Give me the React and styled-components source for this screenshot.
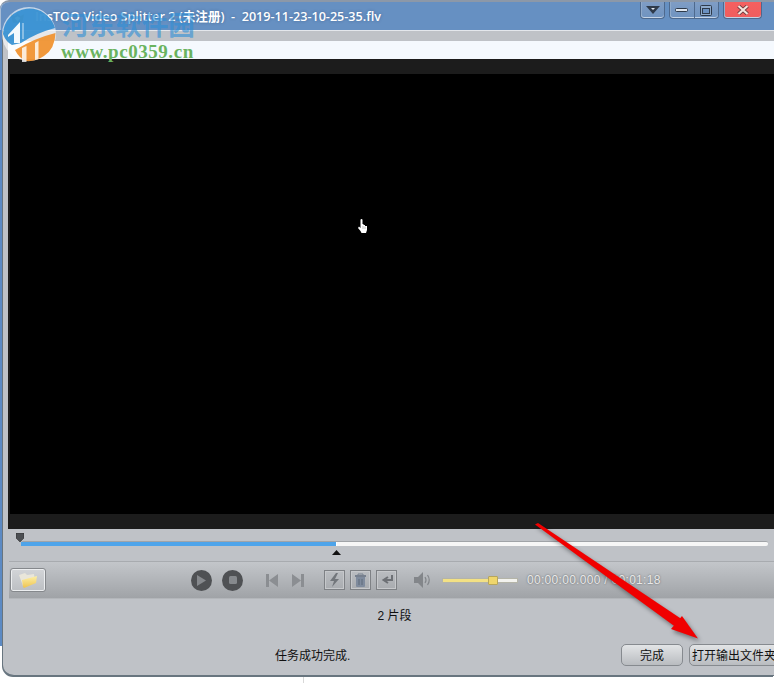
import React from 'react'
import styled, { createGlobalStyle } from 'styled-components'

const CJK = `"Liberation Sans", "Noto Sans CJK SC", sans-serif`

const GlobalStyle = createGlobalStyle`
  html, body {
    margin: 0;
    background: #fff;
    overflow: hidden;
  }
`

const App = () => (
  <Page>
    <GlobalStyle />
    <TitleBar>
      <AppIcon viewBox="0 0 16 10">
        <path d="M1 1l4 2 3-3 3 3 4-2-2 9H3z" fill="#37513f" />
        <path d="M5 5l3-2 3 2-3 4z" fill="#d9e58c" />
      </AppIcon>
      <Title>InsTOO Video Splitter 2 (未注册)&nbsp; - &nbsp;2019-11-23-10-25-35.flv</Title>
      <WindowControls>
        <MenuButton>
          <svg width="14" height="8" viewBox="0 0 14 8">
            <path d="M0 0h14L7 8z" fill="#2e3a4a" />
            <path d="M5 2h4L7 4z" fill="#dfe6ef" />
          </svg>
        </MenuButton>
        <SizeGroup>
          <SizeButton>
            <svg width="14" height="5" viewBox="0 0 14 5">
              <rect x="0.5" y="0.5" width="12" height="3" rx="1" fill="#dfe6ef" stroke="#2e3a4a" />
            </svg>
          </SizeButton>
          <SizeButton>
            <svg width="12" height="11" viewBox="0 0 12 11">
              <rect x="0.5" y="0.5" width="11" height="10" rx="1" fill="#8eaacb" stroke="#2e3a4a" />
              <rect x="2.5" y="3.5" width="7" height="5" fill="#6a90c0" stroke="#2e3a4a" />
            </svg>
          </SizeButton>
        </SizeGroup>
        <CloseButton>
          <svg width="12" height="10" viewBox="0 0 12 10">
            <path d="M1.500 1l9 8M10.500 1l-9 8" stroke="#6d3b3f" strokeWidth="3.800" />
            <path d="M1.500 1l9 8M10.500 1l-9 8" stroke="#f6e4dc" strokeWidth="2.200" />
          </svg>
        </CloseButton>
      </WindowControls>
    </TitleBar>

    <Body>
      <BlueRail />
      <Client>
        <GreyStrip />
        <WhiteStrip />
        <Player>
          <Letterbox />
          <Screen />
          <Letterbox />
        </Player>

        <SeekArea>
          <Track>
            <Played />
            <StartMarker viewBox="0 0 8 9">
              <path d="M0 0h8v5L4 9 0 5z" fill="#4c4f53" stroke="#222" strokeWidth="0.5" />
            </StartMarker>
            <EndMarker viewBox="0 0 9 5">
              <path d="M4.500 0L9 5H0z" fill="#111" />
            </EndMarker>
          </Track>
        </SeekArea>

        <Toolbar>
          <FolderButton>
            <svg width="20" height="15" viewBox="0 0 20 15">
              <defs>
                <linearGradient id="folderFill" x1="0" y1="0" x2="0" y2="1">
                  <stop offset="0" stopColor="#fdf0a8" />
                  <stop offset="1" stopColor="#eec34f" />
                </linearGradient>
              </defs>
              <path d="M1 2l6-2 2 2 7-1 1 8-12 4z" fill="#e9e6da" />
              <path d="M4 7l15-4-1 7-12 5-1-1z" fill="url(#folderFill)" />
            </svg>
          </FolderButton>

          <RoundGroup>
            <RoundButton>
              <svg width="9" height="11" viewBox="0 0 9 11"><path d="M0 0l9 5.500L0 11z" fill="#86898d" /></svg>
            </RoundButton>
            <RoundButton>
              <svg width="8" height="8" viewBox="0 0 8 8"><rect width="8" height="8" rx="1.500" fill="#86898d" /></svg>
            </RoundButton>
          </RoundGroup>

          <StepGroup>
            <svg width="12" height="13" viewBox="0 0 12 13"><path d="M0 0h3v13H0zM12 0v13L3 6.500z" fill="#8b8e92" /></svg>
            <svg width="12" height="13" viewBox="0 0 12 13"><path d="M12 0H9v13h3zM0 0v13l9-6.500z" fill="#8b8e92" /></svg>
          </StepGroup>

          <EditGroup>
            <EditButton>
              <svg width="11" height="14" viewBox="0 0 11 14"><path d="M7 0L1 8h4l-2 6 7-8H6l3-6z" fill="#72767b" /></svg>
            </EditButton>
            <EditButton>
              <svg width="13" height="14" viewBox="0 0 13 14">
                <path d="M1 2h11v2H1z" fill="#77808e" />
                <path d="M2 4h9v9a1 1 0 0 1-1 1H3a1 1 0 0 1-1-1z" fill="#7f8b9d" />
                <path d="M5 6v6M8 6v6" stroke="#5f6a7a" />
                <path d="M4 2V1h5v1" stroke="#77808e" fill="none" />
              </svg>
            </EditButton>
            <EditButton>
              <svg width="13" height="10" viewBox="0 0 13 10"><path d="M12 0v5H5M8 2L3.500 5 8 8" fill="none" stroke="#6d7075" strokeWidth="2" /></svg>
            </EditButton>
          </EditGroup>

          <Speaker viewBox="0 0 18 16">
            <path d="M0 5h4l5-5v16l-5-5H0z" fill="#83868a" />
            <path d="M11 5q2 3 0 6M13.500 3q3.500 5 0 10" fill="none" stroke="#83868a" strokeWidth="1.200" />
          </Speaker>

          <Volume>
            <VolumeFill />
            <VolumeThumb />
          </Volume>

          <Time>00:00:00.000 / 00:01:18</Time>
        </Toolbar>

        <Footer>
          <Count>2 片段</Count>
          <FooterRow>
            <Status>任务成功完成.</Status>
            <DoneButton>完成</DoneButton>
            <OpenButton>打开输出文件夹</OpenButton>
          </FooterRow>
        </Footer>
      </Client>
    </Body>
    <Tick />

    <Cursor viewBox="0 0 10 14">
      <path d="M2.500 1a1 1 0 0 1 2 0v4h1v1h1.500v1H9v4l-1 3H3.500L2.500 12 0 9l1-1.500L2.500 9z" fill="#fff" />
      <path d="M5 7v3M7 7.500V10" stroke="#999" strokeWidth="0.6" />
    </Cursor>

    <WatermarkLogo viewBox="0 0 60 66">
      <circle cx="29" cy="34" r="27" fill="#fff" fillOpacity="0.62" />
      <path d="M3 34A26.500 26.500 0 0 1 55 28Q36 33 21 43L12 45Q6 42 3 34z" fill="#2b8bd0" fillOpacity="0.88" />
      <path d="M8 35L20 22v21h-6V33l-6 4z" fill="#fff" fillOpacity="0.95" />
      <path d="M23 23V39" stroke="#fff" strokeOpacity="0.5" strokeWidth="1.500" />
      <path d="M15 50Q35 38 55.500 33Q55 49 44 56Q35 62 26 61Q19 58 15 50z" fill="#f0902c" fillOpacity="0.92" />
      <path d="M22 48v14h4.500V46zM35 43v17l3.500-1V41z" fill="#fff" fillOpacity="0.8" />
    </WatermarkLogo>
    <WatermarkName>河东软件园</WatermarkName>
    <WatermarkUrl>www.pc0359.cn</WatermarkUrl>

    <Arrow viewBox="0 0 190 130">
      <path d="M0 1.500L3 0L148 97L142 105z" fill="#f00000" />
      <path d="M163 115.500L136 106L147 93z" fill="#f00000" />
    </Arrow>
  </Page>
)

const Page = styled.div`
  position: relative;
  width: 774px;
  height: 683px;
  overflow: hidden;
  background: #fff;
  font-family: ${CJK};
`

const TitleBar = styled.header`
  display: flex;
  align-items: flex-start;
  height: 28px;
  border-top: 2px solid #8c98a8;
  border-top-left-radius: 9px;
  background: #6690c2;
  box-shadow: inset 1px 0 0 #a9bdd6;
`

const AppIcon = styled.svg`
  width: 15px;
  height: 10px;
  margin: 11px 0 0 10px;
`

const Title = styled.div`
  margin: 6px 0 0 10px;
  font-family: "Open Sans", "Noto Sans CJK SC", sans-serif;
  font-size: 12.6px;
  font-weight: 600;
  line-height: 17px;
  color: #fff;
  text-shadow: 0 0 3px rgba(30, 60, 100, 0.45);
  white-space: nowrap;
`

const WindowControls = styled.div`
  display: flex;
  gap: 4px;
  margin-left: auto;
  margin-right: 12px;
`

const ControlBase = styled.div`
  display: flex;
  align-items: center;
  justify-content: center;
  height: 17px;
  box-sizing: border-box;
  border: 1px solid #4e698d;
  border-top: 0;
  border-radius: 0 0 4px 4px;
  box-shadow: inset 0 -1px 0 #c5d4e6, inset 1px 0 0 #8faacb;
`

const MenuButton = styled(ControlBase)`
  width: 25px;
  background: linear-gradient(#7f9dc5, #6f93c0);
`

const SizeGroup = styled(ControlBase)`
  width: 50px;
  background: linear-gradient(#7f9dc5, #6f93c0);
`

const SizeButton = styled.div`
  display: flex;
  flex: 1;
  align-items: center;
  justify-content: center;
  height: 100%;
  & + & {
    border-left: 1px solid #4e698d;
  }
`

const CloseButton = styled(ControlBase)`
  width: 39px;
  background: linear-gradient(#f4605f, #ef5d5e);
`

const Body = styled.div`
  display: flex;
  height: 646px;
`

const BlueRail = styled.div`
  flex: none;
  width: 3px;
  height: 616px;
  background: #5c8ac4;
`

const Client = styled.main`
  display: flex;
  flex: 1;
  flex-direction: column;
  min-width: 0;
  box-sizing: border-box;
  padding-left: 5px;
  background: #bfc2c7;
  border-bottom: 1px solid #68757f;
  border-bottom-left-radius: 11px;
  box-shadow: -1px 1px 0 #68757f;
`

const GreyStrip = styled.div`
  height: 11px;
  margin-left: -5px;
  background: #bfc2c7;
  border-top: 1px solid #e4e7ec;
  box-sizing: border-box;
`

const WhiteStrip = styled.div`
  height: 18px;
  background: #f5f9fe;
`

const Player = styled.section`
  display: flex;
  flex-direction: column;
  background: #1c1c1c;
`

const Letterbox = styled.div`
  height: 15px;
`

const Screen = styled.div`
  height: 440px;
  margin-left: 2px;
  background: #000;
`

const SeekArea = styled.div`
  height: 32px;
  padding: 12px 6px 0 13px;
  box-sizing: border-box;
`

const Track = styled.div`
  position: relative;
  height: 5px;
  background: #f6f6f6;
  border-top: 1px solid #a0a3a7;
  box-sizing: border-box;
  border-radius: 2px;
`

const Played = styled.div`
  width: 315px;
  height: 100%;
  background: #4ea4ea;
  border-right: 1px solid #fff;
`

const StartMarker = styled.svg`
  position: absolute;
  left: -5px;
  top: -9px;
  width: 8px;
  height: 9px;
`

const EndMarker = styled.svg`
  position: absolute;
  left: 311px;
  top: 8px;
  width: 9px;
  height: 5px;
`

const Toolbar = styled.div`
  display: flex;
  align-items: center;
  height: 38px;
  margin-left: 1px;
  box-sizing: border-box;
  background: linear-gradient(#c3c6ca, #a0a3a7);
  border-top: 1px solid #a8abaf;
  border-bottom: 1px solid #b3b6ba;
`

const FolderButton = styled.div`
  display: flex;
  flex: none;
  align-items: center;
  justify-content: center;
  width: 36px;
  height: 24px;
  margin-left: 1px;
  box-sizing: border-box;
  background: linear-gradient(#d3d5d8, #bcbfc3);
  border: 1px solid #85888c;
  border-radius: 3px;
  box-shadow: inset 0 0 0 1px #eceef0;
`

const RoundGroup = styled.div`
  display: flex;
  gap: 10px;
  margin-left: 145px;
`

const RoundButton = styled.div`
  display: flex;
  align-items: center;
  justify-content: center;
  width: 21px;
  height: 21px;
  border-radius: 50%;
  background: #4f5154;
`

const StepGroup = styled.div`
  display: flex;
  gap: 14px;
  margin-left: 23px;
`

const EditGroup = styled.div`
  display: flex;
  gap: 5px;
  margin-left: 20px;
`

const EditButton = styled.div`
  display: flex;
  align-items: center;
  justify-content: center;
  width: 21px;
  height: 20px;
  box-sizing: border-box;
  border: 1px solid #7e8185;
  box-shadow: inset 0 0 0 1px #c6c8cb;
`

const Speaker = styled.svg`
  flex: none;
  width: 18px;
  height: 16px;
  margin-left: 17px;
`

const Volume = styled.div`
  position: relative;
  flex: none;
  width: 76px;
  height: 5px;
  margin-left: 10px;
  background: #f2f2ee;
  border: 1px solid #b4b4a8;
  box-sizing: border-box;
`

const VolumeFill = styled.div`
  width: 46px;
  height: 100%;
  background: #f3e184;
`

const VolumeThumb = styled.div`
  position: absolute;
  left: 45px;
  top: -3px;
  width: 10px;
  height: 9px;
  box-sizing: border-box;
  background: #efd66c;
  border: 1px solid #b7a65c;
  border-radius: 1px;
`

const Time = styled.div`
  margin-left: 9px;
  font-size: 12px;
  letter-spacing: 0.3px;
  color: #e9e9e9;
  text-shadow: 0 0 2px #55585c;
  white-space: nowrap;
`

const Footer = styled.footer`
  display: flex;
  flex: 1;
  flex-direction: column;
  font-family: ${CJK};
  font-size: 12px;
  color: #111;
`

const Count = styled.div`
  margin-top: 9px;
  margin-left: 7px;
  line-height: 17px;
  text-align: center;
`

const FooterRow = styled.div`
  display: flex;
  align-items: center;
  margin-top: 19px;
  height: 21px;
`

const Status = styled.div`
  flex: none;
  margin-left: 267px;
  width: 346px;
  white-space: nowrap;
`

const ButtonBase = styled.div`
  display: flex;
  flex: none;
  align-items: center;
  height: 22px;
  box-sizing: border-box;
  background: linear-gradient(#e2e4e6, #b9bcc0);
  border: 1px solid #868a8f;
  border-radius: 5px;
`

const DoneButton = styled(ButtonBase)`
  justify-content: center;
  width: 62px;
`

const OpenButton = styled(ButtonBase)`
  width: 100px;
  margin-left: 6px;
  padding-left: 2px;
  white-space: nowrap;
`

const Tick = styled.div`
  width: 1px;
  height: 6px;
  margin-left: 303px;
  margin-top: 1px;
  background: #d8d8d8;
`

const Cursor = styled.svg`
  position: absolute;
  left: 358px;
  top: 219px;
  width: 10px;
  height: 14px;
`

const WatermarkLogo = styled.svg`
  position: absolute;
  left: 0;
  top: 0;
  width: 60px;
  height: 66px;
`

const WatermarkName = styled.div`
  position: absolute;
  left: 62px;
  top: 10px;
  font-family: "Liberation Serif", "Noto Sans CJK SC", serif;
  font-size: 26.6px;
  font-weight: 700;
  line-height: 32px;
  color: rgba(45, 143, 215, 0.62);
  white-space: nowrap;
`

const WatermarkUrl = styled.div`
  position: absolute;
  left: 61px;
  top: 41px;
  font-family: "Liberation Serif", serif;
  font-size: 19px;
  font-weight: 700;
  line-height: 22px;
  letter-spacing: 0.55px;
  color: #6ab35f;
  white-space: nowrap;
`

const Arrow = styled.svg`
  position: absolute;
  left: 535px;
  top: 523px;
  width: 190px;
  height: 130px;
  filter: drop-shadow(2px 3px 2px rgba(0, 0, 0, 0.4));
`

export default App
